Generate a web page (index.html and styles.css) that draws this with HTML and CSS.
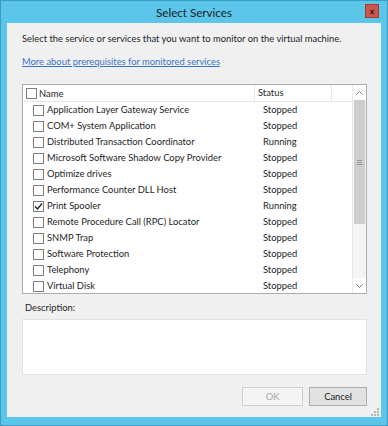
FILE: index.html
```html
<!DOCTYPE html>
<html>
<head>
<meta name="viewport" content="width=device-width, initial-scale=1">
<title>Select Services</title>
<link rel="stylesheet" href="styles.css">
</head>
<body>

<div class="window">
  <div class="titlebar">
    <span class="title">Select Services</span>
    <button class="close" title="Close">x</button>
  </div>

  <div class="content">
    <p class="intro">Select the service or services that you want to monitor on the virtual machine.</p>
    <a href="#" class="link">More about prerequisites for monitored services</a>

    <!-- services list -->
    <div class="list">
      <div class="list-main">
        <div class="list-head">
          <div class="col-name"><span class="box"></span>Name</div>
          <div class="col-status">Status</div>
          <div class="col-blank"></div>
        </div>
        <div class="rows">
          <div class="row"><div class="col-name"><span class="box"></span>Application Layer Gateway Service</div><div class="col-status">Stopped</div></div>
          <div class="row"><div class="col-name"><span class="box"></span>COM+ System Application</div><div class="col-status">Stopped</div></div>
          <div class="row"><div class="col-name"><span class="box"></span>Distributed Transaction Coordinator</div><div class="col-status">Running</div></div>
          <div class="row"><div class="col-name"><span class="box"></span>Microsoft Software Shadow Copy Provider</div><div class="col-status">Stopped</div></div>
          <div class="row"><div class="col-name"><span class="box"></span>Optimize drives</div><div class="col-status">Stopped</div></div>
          <div class="row"><div class="col-name"><span class="box"></span>Performance Counter DLL Host</div><div class="col-status">Stopped</div></div>
          <div class="row"><div class="col-name"><span class="box checked"><svg width="9" height="9" viewBox="0 0 9 9"><path d="M1 4.5 L3.5 7 L8 1.5" fill="none" stroke="#222" stroke-width="1.4"/></svg></span>Print Spooler</div><div class="col-status">Running</div></div>
          <div class="row"><div class="col-name"><span class="box"></span>Remote Procedure Call (RPC) Locator</div><div class="col-status">Stopped</div></div>
          <div class="row"><div class="col-name"><span class="box"></span>SNMP Trap</div><div class="col-status">Stopped</div></div>
          <div class="row"><div class="col-name"><span class="box"></span>Software Protection</div><div class="col-status">Stopped</div></div>
          <div class="row"><div class="col-name"><span class="box"></span>Telephony</div><div class="col-status">Stopped</div></div>
          <div class="row"><div class="col-name"><span class="box"></span>Virtual Disk</div><div class="col-status">Stopped</div></div>
        </div>
      </div>
      <div class="scrollbar">
        <div class="arrow"><svg width="7" height="4" viewBox="0 0 7 4"><path d="M0.5 3.5 L3.5 0.5 L6.5 3.5" fill="none" stroke="#7a7a7a"/></svg></div>
        <div class="track">
          <div class="thumb"><span class="grip"></span></div>
        </div>
        <div class="arrow"><svg width="7" height="4" viewBox="0 0 7 4"><path d="M0.5 0.5 L3.5 3.5 L6.5 0.5" fill="none" stroke="#7a7a7a"/></svg></div>
      </div>
    </div>

    <div class="desc-label">Description:</div>
    <div class="desc-box"></div>

    <div class="buttons">
      <button class="btn" disabled>OK</button>
      <button class="btn btn-cancel">Cancel</button>
    </div>
    <svg class="grip-corner" width="8" height="8" viewBox="0 0 8 8">
      <rect x="6" y="0" width="2" height="2" fill="#b8b8b8"/>
      <rect x="3" y="3" width="2" height="2" fill="#b8b8b8"/>
      <rect x="6" y="3" width="2" height="2" fill="#b8b8b8"/>
      <rect x="0" y="6" width="2" height="2" fill="#b8b8b8"/>
      <rect x="3" y="6" width="2" height="2" fill="#b8b8b8"/>
      <rect x="6" y="6" width="2" height="2" fill="#b8b8b8"/>
    </svg>
  </div>
</div>

</body>
</html>
```

FILE: styles.css
```css
body {
    margin: 0;
    font-family: Lato, "Noto Sans", sans-serif;
    font-size: 9.4px;
    color: #1e1e1e;
}

/* Window frame */
.window {
    width: 388px;
    height: 426px;
    box-sizing: border-box;
    border: 1px solid #3b9cc3;
    background-color: #5bc6e9;
    padding: 0 6px 8px 6px;
    display: flex;
    flex-direction: column;
}

.titlebar {
    height: 22px;
    position: relative;
    display: flex;
    justify-content: center;
    align-items: center;
}

.title {
    font-size: 11.6px;
    color: #1b1b1b;
}

.close {
    position: absolute;
    right: 2px;
    top: 3px;
    width: 14px;
    height: 14px;
    padding: 0;
    border: 1px solid #a43a32;
    background-color: #c9554b;
    color: #2a0d0a;
    font-family: "Liberation Sans", sans-serif;
    font-size: 8px;
    font-weight: bold;
    line-height: 11px;
}

.content {
    flex: 1;
    background-color: #f0f0f0;
    padding: 9px 14px 0 15px;
    position: relative;
}

.intro {
    margin: 0;
    line-height: 14px;
}

.link {
    display: block;
    margin-top: 9px;
    line-height: 14px;
    color: #3a73c9;
    text-decoration: underline;
}

/* List view */
.list {
    margin-top: 15px;
    height: 210px;
    box-sizing: border-box;
    border: 1px solid #acacac;
    background-color: #fff;
    display: flex;
    overflow: hidden;
}

.list-main {
    flex: 1;
    display: flex;
    flex-direction: column;
    overflow: hidden;
}

.list-head {
    display: flex;
    flex: none;
    height: 16px;
    border-bottom: 1px solid #e5e5e5;
    line-height: 15px;
}

.list-head .col-name {
    padding-left: 3px;
    border-right: 1px solid #e5e5e5;
}

.list-head .col-status {
    padding-left: 3px;
    border-right: 1px solid #e5e5e5;
}

.list-head .box {
    margin-right: 2px;
}

.col-name {
    width: 232px;
    box-sizing: border-box;
    display: flex;
    align-items: center;
    white-space: nowrap;
    overflow: hidden;
}

.col-status {
    width: 77px;
    box-sizing: border-box;
}

.col-blank {
    flex: 1;
}

.row {
    display: flex;
    height: 16px;
    line-height: 16px;
}

.row .col-name {
    padding-left: 10px;
}

.row .col-status {
    padding-left: 8px;
}

.box {
    width: 11px;
    height: 11px;
    box-sizing: border-box;
    border: 1px solid #7d7d7d;
    background-color: #fff;
    margin-right: 3px;
    display: inline-flex;
    align-items: center;
    justify-content: center;
    flex: none;
}

/* Scrollbar */
.scrollbar {
    width: 13px;
    border-left: 1px solid #e8e8e8;
    display: flex;
    flex-direction: column;
    background-color: #f4f4f4;
}

.arrow {
    height: 15px;
    display: flex;
    align-items: center;
    justify-content: center;
    background-color: #fff;
}

.track {
    flex: 1;
}

.thumb {
    height: 124px;
    margin: 0 1px;
    background-color: #cdcdcd;
    display: flex;
    align-items: center;
    justify-content: center;
}

.grip {
    width: 5px;
    height: 5px;
    background: repeating-linear-gradient(#9b9b9b 0 1px, transparent 1px 2px);
}

.desc-label {
    margin-top: 7px;
    padding-left: 3px;
    line-height: 14px;
}

.desc-box {
    margin-top: 4px;
    height: 54px;
    border: 1px solid #e3e3e3;
    background-color: #fff;
}

.buttons {
    margin-top: 12px;
    display: flex;
    justify-content: flex-end;
    gap: 6px;
}

.btn {
    height: 19px;
    padding: 0;
    font-family: Lato, "Noto Sans", sans-serif;
    font-size: 9.4px;
    color: #1e1e1e;
    border: 1px solid #acacac;
    background-color: #e1e1e1;
}

.btn:disabled {
    width: 61px;
    color: #a6a6a6;
    border-color: #cfcfcf;
    background-color: #f4f4f4;
}

.btn-cancel {
    width: 58px;
}

.grip-corner {
    position: absolute;
    right: 2px;
    bottom: 1px;
}
```
